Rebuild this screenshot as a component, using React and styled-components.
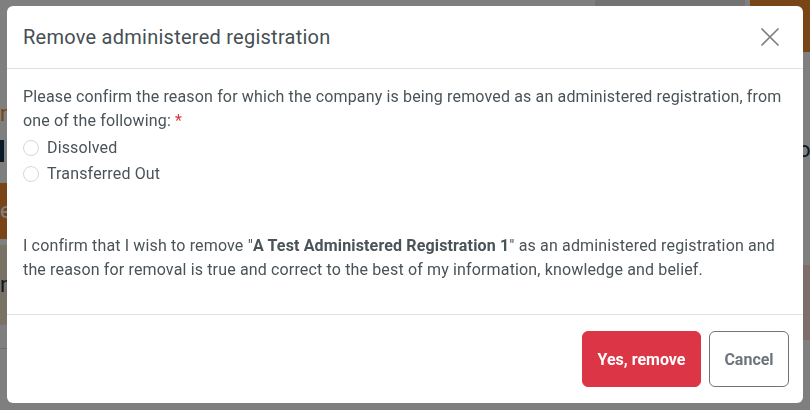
import React, { useState } from 'react'
import styled, { createGlobalStyle } from 'styled-components'

const Global = createGlobalStyle`
  html, body { margin: 0; padding: 0; }
  body {
    width: 810px;
    height: 410px;
    overflow: hidden;
    background: #ffffff;
    font-family: Roboto, "Liberation Sans", sans-serif;
  }
`

// page behind the modal, only bits of it peek out
const Page = styled.div`
  position: relative;
  width: 810px;
  height: 410px;
  background: #fff;
`

const PagePiece = styled.div`
  position: absolute;
  left: ${p => p.x}px;
  top: ${p => p.y}px;
  width: ${p => p.w}px;
  height: ${p => p.h}px;
  background: ${p => p.bg || 'transparent'};
  border-radius: ${p => p.r || 0}px;
  color: ${p => p.color || '#222'};
  font-size: 22px;
  line-height: ${p => p.h}px;
  overflow: hidden;
`

const Overlay = styled.div`
  position: fixed;
  inset: 0;
  background: rgba(0, 0, 0, 0.5);
  display: flex;
  justify-content: center;
  align-items: flex-start;
  padding-top: 6px;
`

const Modal = styled.div`
  width: 796px;
  background: #fff;
  border-radius: 6px;
  display: flex;
  flex-direction: column;
  color: #4a5358;
  letter-spacing: 0.15px;
`

const Header = styled.div`
  display: flex;
  align-items: center;
  justify-content: space-between;
  height: 63px;
  padding: 0 16px 1px 16px;
  border-bottom: 1px solid #dee2e6;
  box-sizing: border-box;
`

const Title = styled.h5`
  margin: 0;
  font-size: 20px;
  font-weight: 400;
  letter-spacing: 0.25px;
  color: #474f54;
`

const Close = styled.button`
  border: none;
  background: none;
  padding: 0;
  width: 24px;
  height: 24px;
  margin-right: 5px;
  display: flex;
  align-items: center;
  justify-content: center;
  cursor: pointer;
`

const Body = styled.div`
  padding: 16px 16px 32px;
  font-size: 16px;
  line-height: 24px;
  border-bottom: 1px solid #dee2e6;
`

const Para = styled.p`
  margin: ${p => p.top || 0}px 0 ${p => p.gap || 0}px;
`

const Required = styled.span`
  color: #dc3545;
`

const Options = styled.div`
  display: flex;
  flex-direction: column;
`

const Option = styled.label`
  display: flex;
  align-items: center;
  gap: 8px;
  height: 26px;
  cursor: pointer;
`

const Radio = styled.input.attrs({ type: 'radio' })`
  appearance: none;
  margin: 0;
  width: 16px;
  height: 16px;
  border: 1px solid #d3d6da;
  border-radius: 50%;
  background: #fff;
  &:checked {
    border: 5px solid #0d6efd;
  }
`

const Footer = styled.div`
  display: flex;
  justify-content: flex-end;
  gap: 8px;
  padding: 16px 14px 16px;
`

const Button = styled.button`
  height: 56px;
  width: ${p => p.w}px;
  padding: 0;
  border-radius: 6px;
  font-family: inherit;
  font-size: 16px;
  font-weight: 700;
  cursor: pointer;
  border: 1px solid ${p => (p.danger ? '#dc3545' : '#6c757d')};
  background: ${p => (p.danger ? '#dc3545' : '#fff')};
  color: ${p => (p.danger ? '#fff' : '#6c757d')};
`

const CloseIcon = () => (
  <svg width="20" height="20" viewBox="0 0 20 20">
    <path d="M1.5 1.5 L18.5 18.5 M18.5 1.5 L1.5 18.5" stroke="#808080" strokeWidth="1.7" />
  </svg>
)

export default function App() {
  const [reason, setReason] = useState('')

  return (
    <>
      <Global />
      <Page>
        <PagePiece x={595} y={-10} w={150} h={30} bg="#e6e6e6" r={12} />
        <PagePiece x={750} y={-10} w={70} h={62} bg="#ef8a2c" r={10} />
        <PagePiece x={0} y={102} w={12} h={24} color="#ef8a2c">n</PagePiece>
        <PagePiece x={0} y={140} w={4} h={22} bg="#14334d" />
        <PagePiece x={0} y={183} w={12} h={56} bg="#ef8a2c" color="#fff">e</PagePiece>
        <PagePiece x={0} y={245} w={12} h={80} bg="#f3e6cc" color="#14334d">n</PagePiece>
        <PagePiece x={0} y={348} w={12} h={1} bg="#ddd" />
        <PagePiece x={798} y={138} w={12} h={24} color="#14334d">o</PagePiece>
        <PagePiece x={798} y={265} w={12} h={75} bg="#fbdcd6" />
      </Page>
      <Overlay>
        <Modal>
          <Header>
            <Title>Remove administered registration</Title>
            <Close aria-label="Close"><CloseIcon /></Close>
          </Header>
          <Body>
            <Para gap={2}>
              Please confirm the reason for which the company is being removed as an administered registration, from one of the following: <Required>*</Required>
            </Para>
            <Options>
              <Option>
                <Radio name="reason" checked={reason === 'd'} onChange={() => setReason('d')} />
                Dissolved
              </Option>
              <Option>
                <Radio name="reason" checked={reason === 't'} onChange={() => setReason('t')} />
                Transferred Out
              </Option>
            </Options>
            <Para top={47}>
              I confirm that I wish to remove "<b>A Test Administered Registration 1</b>" as an administered registration and the reason for removal is true and correct to the best of my information, knowledge and belief.
            </Para>
          </Body>
          <Footer>
            <Button danger w={119}>Yes, remove</Button>
            <Button w={80}>Cancel</Button>
          </Footer>
        </Modal>
      </Overlay>
    </>
  )
}
